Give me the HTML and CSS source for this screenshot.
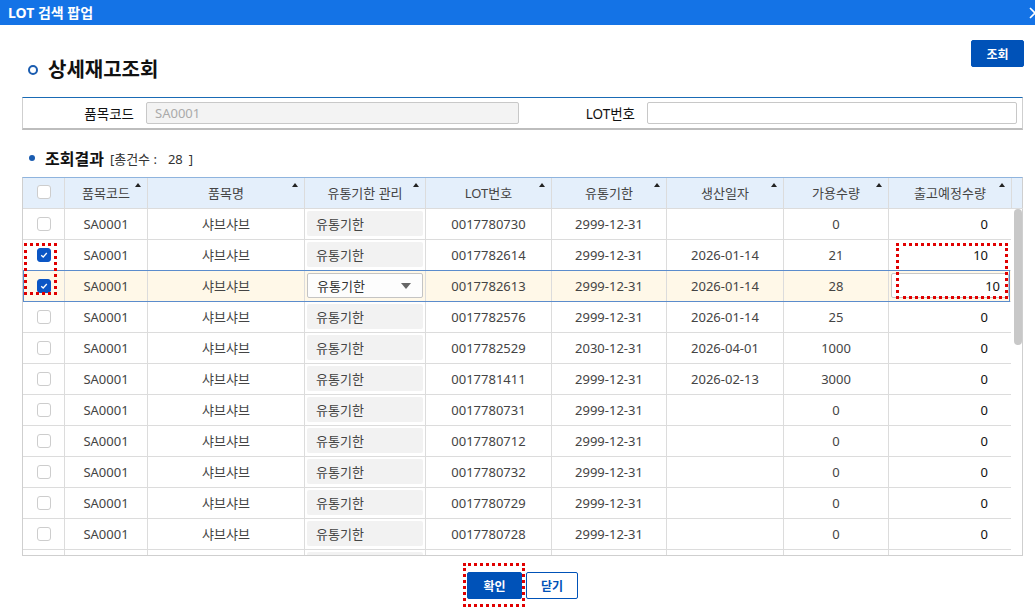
FILE: index.html
```html
<!DOCTYPE html>
<html lang="ko">
<head>
    <meta charset="UTF-8">
    <title>LOT 검색 팝업</title>
    <link rel="stylesheet" href="styles.css">
</head>
<body>
    <div class="titlebar">
        <span>LOT 검색 팝업</span>
        <svg class="close" width="12" height="12" viewBox="0 0 12 12"><path d="M1 1L11 11M11 1L1 11" stroke="#fff" stroke-width="1.6" fill="none"/></svg>
    </div>

    <div class="content">
        <div class="page-head">
            <h2 class="page-title"><span class="ring"></span>상세재고조회</h2>
            <button class="btn btn-primary btn-search">조회</button>
        </div>

        <div class="search-form">
            <label>품목코드</label>
            <input type="text" class="field" value="SA0001" disabled>
            <label>LOT번호</label>
            <input type="text" class="field">
        </div>

        <div class="result-title">
            <span class="dot"></span>
            <strong>조회결과</strong>
            <span class="count">[총건수 :<span class="total">28</span>]</span>
        </div>

        <div class="grid">
            <div class="grid-head">
                <div class="hcell"><span class="chk"></span></div>
                <div class="hcell sort">품목코드</div>
                <div class="hcell sort">품목명</div>
                <div class="hcell sort">유통기한 관리</div>
                <div class="hcell sort">LOT번호</div>
                <div class="hcell sort">유통기한</div>
                <div class="hcell sort">생산일자</div>
                <div class="hcell sort">가용수량</div>
                <div class="hcell sort">출고예정수량</div>
                <div class="hcell"></div>
            </div>
            <div class="grid-main">
                <div class="grid-body" id="gridBody"></div>
                <div class="vscroll"><div class="thumb"></div></div>
            </div>
        </div>

        <div class="actions">
            <button class="btn btn-primary btn-ok">확인</button>
            <button class="btn btn-line btn-close">닫기</button>
        </div>
    </div>

    <div class="mark mark-check"></div>
    <div class="mark mark-qty"></div>
    <div class="mark mark-ok"></div>

    <script>
        // lot, expiry, made, avail, out, checked, editing
        var rows = [
            ["0017780730", "2999-12-31", "", 0, 0],
            ["0017782614", "2999-12-31", "2026-01-14", 21, 10, true],
            ["0017782613", "2999-12-31", "2026-01-14", 28, 10, true, true],
            ["0017782576", "2999-12-31", "2026-01-14", 25, 0],
            ["0017782529", "2030-12-31", "2026-04-01", 1000, 0],
            ["0017781411", "2999-12-31", "2026-02-13", 3000, 0],
            ["0017780731", "2999-12-31", "", 0, 0],
            ["0017780712", "2999-12-31", "", 0, 0],
            ["0017780732", "2999-12-31", "", 0, 0],
            ["0017780729", "2999-12-31", "", 0, 0],
            ["0017780728", "2999-12-31", "", 0, 0]
        ];

        var tick = '<svg width="8" height="8" viewBox="0 0 8 8"><path d="M1.2 4.2L3.2 6L6.8 2" stroke="#fff" stroke-width="1.3" fill="none"/></svg>';
        var html = "";

        for (var i = 0; i < rows.length; i++) {
            var r = rows[i];
            var editing = r[6];
            html += '<div class="row' + (editing ? ' row-sel' : '') + '">';
            html += '<div class="cell"><span class="chk' + (r[5] ? ' on' : '') + '">' + (r[5] ? tick : '') + '</span></div>';
            html += '<div class="cell">SA0001</div>';
            html += '<div class="cell">샤브샤브</div>';
            if (editing) {
                html += '<div class="cell cell-box"><span class="select">유통기한<i class="caret"></i></span></div>';
            } else {
                html += '<div class="cell cell-box"><span class="ro">유통기한</span></div>';
            }
            html += '<div class="cell">' + r[0] + '</div>';
            html += '<div class="cell">' + r[1] + '</div>';
            html += '<div class="cell">' + r[2] + '</div>';
            html += '<div class="cell">' + r[3] + '</div>';
            if (editing) {
                html += '<div class="cell cell-box"><span class="qty-input">' + r[4] + '</span></div>';
            } else {
                html += '<div class="cell num">' + r[4] + '</div>';
            }
            html += '</div>';
        }

        // next row, only its top edge shows above the grid bottom
        html += '<div class="row"><div class="cell"></div><div class="cell"></div><div class="cell"></div>' +
            '<div class="cell cell-box"><span class="ro"></span></div><div class="cell"></div><div class="cell"></div>' +
            '<div class="cell"></div><div class="cell"></div><div class="cell"></div></div>';

        document.getElementById("gridBody").innerHTML = html;
    </script>
</body>
</html>
```

FILE: styles.css
```css
body {
    margin: 0;
    width: 1035px;
    height: 610px;
    overflow: hidden;
    position: relative;
    font-family: "Noto Sans", "Noto Sans CJK KR", sans-serif;
    font-size: 13px;
    color: #333;
    background: #fff;
}

.titlebar {
    height: 25px;
    background: #1473e6;
    color: #fff;
    font-size: 14px;
    font-weight: bold;
    line-height: 25px;
    padding-left: 8px;
    display: flex;
    justify-content: space-between;
    align-items: center;
}
.titlebar .close {
    margin-right: -6px;
}

.content {
    padding: 0 12px 0 22px;
}

.page-head {
    height: 57px;
    padding-top: 15px;
    display: flex;
    justify-content: space-between;
    align-items: flex-start;
}
.page-title {
    margin: 19px 0 0 6px;
    font-size: 20px;
    line-height: 22px;
    color: #111;
    display: flex;
    align-items: center;
    gap: 10px;
}
.ring {
    width: 6px;
    height: 6px;
    border: 2.5px solid #1a5cb0;
    border-radius: 50%;
}

.btn {
    height: 27px;
    border-radius: 2px;
    font-family: inherit;
    font-size: 12px;
    font-weight: bold;
    padding: 0;
    cursor: pointer;
}
.btn-primary {
    background: #0052b8;
    border: 1px solid #0052b8;
    color: #fff;
}
.btn-line {
    background: #fff;
    border: 1px solid #0052b8;
    color: #0052b8;
}
.btn-search {
    width: 53px;
    margin-right: -1px;
}

.search-form {
    height: 30px;
    border: 1px solid #cfcfcf;
    border-top-color: #1a6bb5;
    border-bottom: 2px solid #bdbdbd;
    display: grid;
    grid-template-columns: 111px 373px 104px 370px;
    column-gap: 12px;
    align-items: center;
}
.search-form label {
    text-align: right;
    color: #111;
    font-size: 13.5px;
}
.field {
    box-sizing: border-box;
    height: 22px;
    border: 1px solid #c8c8c8;
    border-radius: 2px;
    padding: 0 8px;
    font-family: inherit;
    font-size: 13px;
    background: #fff;
}
.field:disabled {
    background: #f3f3f3;
    color: #aaa;
}

.result-title {
    margin: 18px 0 9px;
    height: 20px;
    padding-left: 7px;
    display: flex;
    align-items: center;
}
.result-title .dot {
    width: 6px;
    height: 6px;
    border-radius: 50%;
    background: #1a5cb0;
    margin-right: 10px;
}
.result-title strong {
    font-size: 16px;
    color: #111;
}
.result-title .count {
    font-size: 13px;
    color: #333;
    margin-left: 6px;
}
.result-title .total {
    margin: 0 6px 0 11px;
}

.grid {
    border: 1px solid #cfcfcf;
    border-top-color: #8fb4de;
}
.grid-head,
.row {
    display: grid;
    grid-template-columns: 42px 83px 157px 121px 126px 115px 117px 105px 123px;
}
.grid-head {
    grid-template-columns: 42px 83px 157px 121px 126px 115px 117px 105px 123px 11px;
    background: #e4effb;
}
.hcell,
.cell {
    box-sizing: border-box;
    height: 31px;
    border-right: 1px solid #dcdcdc;
    border-bottom: 1px solid #dcdcdc;
    display: flex;
    align-items: center;
    justify-content: center;
    white-space: nowrap;
}
.hcell {
    color: #444;
    position: relative;
    padding-bottom: 2px;
}
.hcell:last-child {
    border-right: none;
}
.sort::after {
    content: "";
    position: absolute;
    top: 5px;
    right: 6px;
    border-left: 3px solid transparent;
    border-right: 3px solid transparent;
    border-bottom: 4px solid #222;
}

.grid-main {
    display: flex;
    height: 346px;
}
.grid-body {
    width: 989px;
    overflow: hidden;
}
.vscroll {
    flex: 1;
    padding-left: 3px;
}
.thumb {
    width: 8px;
    height: 136px;
    border-radius: 4px;
    background: #c8c8c8;
}

.cell {
    color: #444;
    padding-bottom: 1px;
}
.cell.num {
    justify-content: flex-end;
    padding-right: 23px;
    color: #111;
}
.cell-box {
    padding: 2px 2px 3px;
}

.row-sel {
    background: #fff8e8;
    position: relative;
}
.row-sel::after {
    content: "";
    position: absolute;
    inset: -1px 1px 0 0;
    border: 1px solid #5b8ccc;
    pointer-events: none;
}

.ro,
.select,
.qty-input {
    box-sizing: border-box;
    width: 100%;
    height: 100%;
    border-radius: 2px;
    display: flex;
    align-items: center;
    padding-left: 9px;
}
.ro {
    background: #f2f2f2;
}
.select {
    border: 1px solid #c4c4c4;
    background: #fdfdfd;
    color: #333;
    justify-content: space-between;
    padding-right: 11px;
}
.caret {
    border-left: 5px solid transparent;
    border-right: 5px solid transparent;
    border-top: 6px solid #666;
}
.qty-input {
    border: 1px solid #c8c8c8;
    background: #fff;
    color: #111;
    justify-content: flex-end;
    padding-right: 8px;
}

.chk {
    box-sizing: border-box;
    width: 14px;
    height: 14px;
    border: 1px solid #cdcdcd;
    border-radius: 3px;
    background: #fff;
    display: flex;
    align-items: center;
    justify-content: center;
}
.chk.on {
    background: #0b56c5;
    border-color: #0b56c5;
}

.actions {
    margin-top: 16px;
    display: flex;
    justify-content: center;
    gap: 4px;
}
.btn-ok {
    width: 55px;
}
.btn-close {
    width: 52px;
}

.mark {
    position: absolute;
    box-sizing: border-box;
    border: 3px dotted #e00000;
}
.mark-check {
    left: 24px;
    top: 243px;
    width: 33px;
    height: 52px;
}
.mark-qty {
    left: 896px;
    top: 243px;
    width: 112px;
    height: 56px;
}
.mark-ok {
    left: 463px;
    top: 563px;
    width: 62px;
    height: 44px;
}
```
